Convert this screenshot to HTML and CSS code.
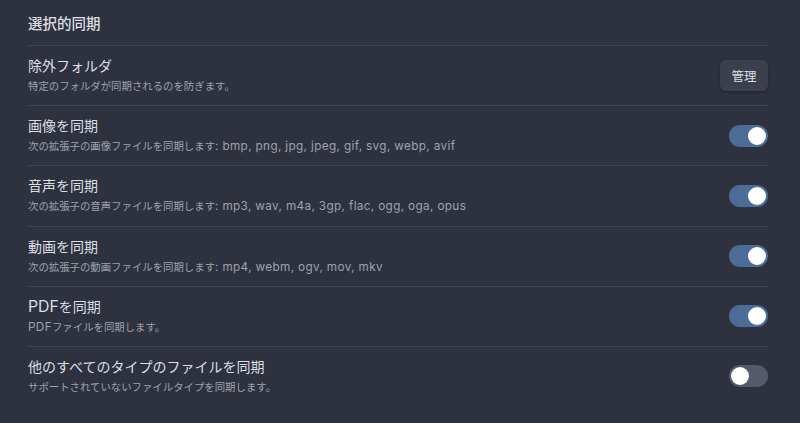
FILE: index.html
```html
<!DOCTYPE html>
<html lang="ja">
<head>
  <meta charset="UTF-8" />
  <title>選択的同期</title>
  <link rel="stylesheet" href="styles.css">
</head>
<body>

  <div class="settings">
    <div class="heading">選択的同期</div>

    <div class="item">
      <div class="info">
        <div class="name">除外フォルダ</div>
        <div class="desc">特定のフォルダが同期されるのを防ぎます。</div>
      </div>
      <button class="btn">管理</button>
    </div>

    <div class="item">
      <div class="info">
        <div class="name">画像を同期</div>
        <div class="desc">次の拡張子の画像ファイルを同期します<span class="lat">: bmp, png, jpg, jpeg, gif, svg, webp, avif</span></div>
      </div>
      <div class="toggle on"><span class="knob"></span></div>
    </div>

    <div class="item">
      <div class="info">
        <div class="name">音声を同期</div>
        <div class="desc">次の拡張子の音声ファイルを同期します<span class="lat">: mp3, wav, m4a, 3gp, flac, ogg, oga, opus</span></div>
      </div>
      <div class="toggle on"><span class="knob"></span></div>
    </div>

    <div class="item">
      <div class="info">
        <div class="name">動画を同期</div>
        <div class="desc">次の拡張子の動画ファイルを同期します<span class="lat">: mp4, webm, ogv, mov, mkv</span></div>
      </div>
      <div class="toggle on"><span class="knob"></span></div>
    </div>

    <div class="item">
      <div class="info">
        <div class="name"><span class="lat">PDF</span>を同期</div>
        <div class="desc"><span class="lat">PDF</span>ファイルを同期します。</div>
      </div>
      <div class="toggle on"><span class="knob"></span></div>
    </div>

    <div class="item last">
      <div class="info">
        <div class="name">他のすべてのタイプのファイルを同期</div>
        <div class="desc">サポートされていないファイルタイプを同期します。</div>
      </div>
      <div class="toggle"><span class="knob"></span></div>
    </div>
  </div>

</body>
</html>
```

FILE: styles.css
```css
body {
  margin: 0;
  background: #2e323f;
  font-family: Inter, "Noto Sans CJK JP", sans-serif;
  color: #dcdee4;
}
.settings {
  padding: 0 32px 0 28px;
}
.heading {
  font-size: 14.5px;
  font-weight: 500;
  line-height: 20px;
  padding: 14px 0 11px;
  border-bottom: 1px solid #40444f;
}
.item {
  display: flex;
  align-items: center;
  justify-content: space-between;
  padding: 10px 0 10.2px;
  border-bottom: 1px solid #40444f;
}
.item.last {
  border-bottom: none;
}
.name {
  font-size: 14px;
  line-height: 20px;
}
.desc {
  font-size: 10.4px;
  line-height: 17px;
  margin-top: 2px;
  color: #9da2ae;
}
.lat {
  font-size: 1.13em;
  line-height: 1;
}
.desc .lat {
  letter-spacing: 0.35px;
}
.btn {
  font-family: inherit;
  font-size: 12.5px;
  color: #dcdee4;
  background: #3c404d;
  border: none;
  border-radius: 6px;
  width: 48px;
  height: 31px;
  padding: 0;
  box-shadow: 0 1px 3px rgba(0, 0, 0, 0.35);
}
.toggle {
  width: 39px;
  height: 22px;
  border-radius: 11px;
  background: #545a69;
  display: flex;
  align-items: center;
  padding: 0 2px;
  box-sizing: border-box;
}
.toggle.on {
  background: #4b6d97;
  justify-content: flex-end;
}
.knob {
  width: 18px;
  height: 18px;
  border-radius: 50%;
  background: #fff;
}
```
